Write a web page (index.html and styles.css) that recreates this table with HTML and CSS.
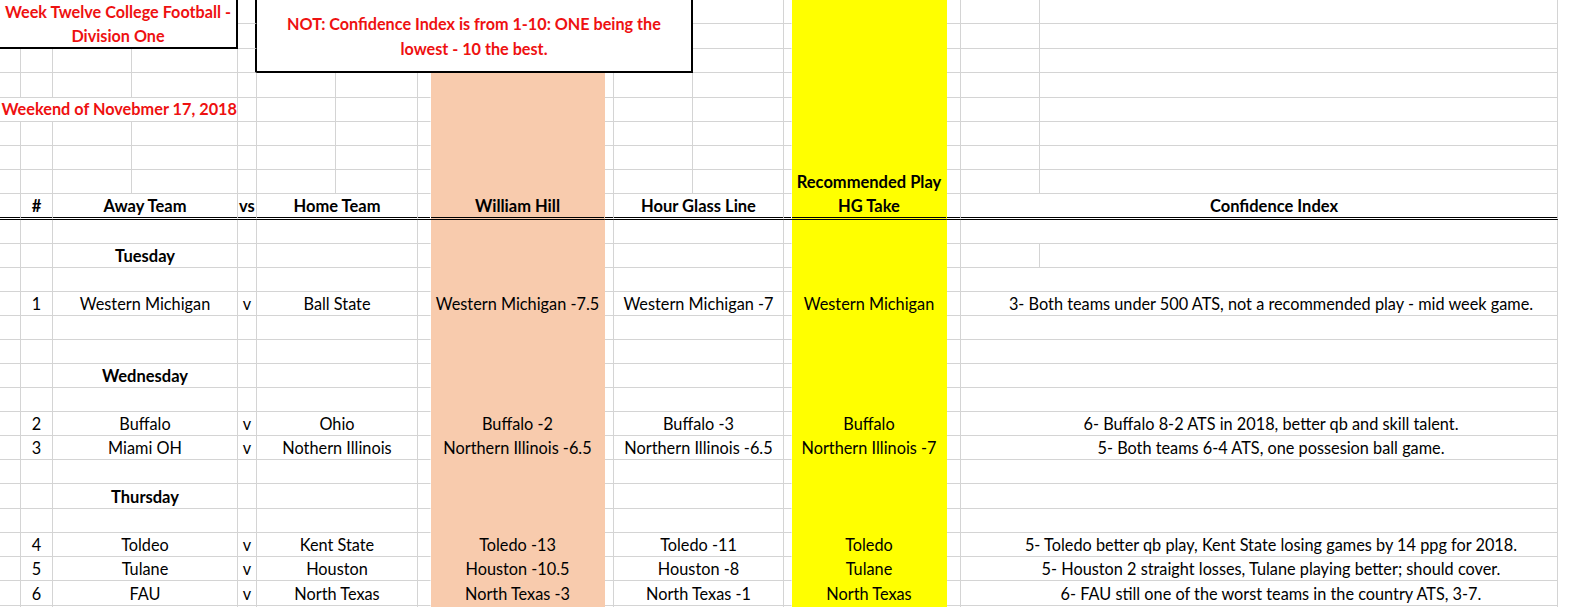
FILE: index.html
```html
<!DOCTYPE html>
<html lang="en">
<head>
<meta charset="utf-8">
<title>Week Twelve College Football - Division One</title>
<link rel="stylesheet" href="styles.css">
</head>
<body>
<div class="sheet">
  <div class="top">
    <div class="box1"><div>Week Twelve College Football -</div><div>Division One</div></div>
    <div class="box2"><div>NOT: Confidence Index is from 1-10: ONE being the</div><div>lowest - 10 the best.</div></div>
    <div class="c bk"></div><div class="c"></div><div class="c nr"></div><div class="c ye"></div><div class="c"></div><div class="c"></div><div class="c"></div>
    <div class="c bk"></div><div class="c"></div><div class="c nr"></div><div class="c ye"></div><div class="c"></div><div class="c"></div><div class="c"></div>
    <div class="c"></div><div class="c"></div><div class="c"></div><div class="c"></div><div class="c bk"></div><div class="c"></div><div class="c nr"></div><div class="c ye"></div><div class="c"></div><div class="c"></div><div class="c"></div>
  </div>

  <div class="row h25">
    <div class="c"></div><div class="c"></div><div class="c"></div><div class="c"></div><div class="c"></div><div class="c"></div><div class="c"></div><div class="c nr"></div><div class="c pe"></div><div class="c"></div><div class="c"></div><div class="c"></div><div class="c nr"></div><div class="c ye"></div><div class="c"></div><div class="c"></div><div class="c"></div>
  </div>
  <div class="row">
    <div class="c s4 red">Weekend of Novebmer 17, 2018</div><div class="c"></div><div class="c"></div><div class="c"></div><div class="c nr"></div><div class="c pe"></div><div class="c"></div><div class="c"></div><div class="c"></div><div class="c nr"></div><div class="c ye"></div><div class="c"></div><div class="c"></div><div class="c"></div>
  </div>
  <div class="row">
    <div class="c"></div><div class="c"></div><div class="c"></div><div class="c"></div><div class="c"></div><div class="c"></div><div class="c"></div><div class="c nr"></div><div class="c pe"></div><div class="c"></div><div class="c"></div><div class="c"></div><div class="c nr"></div><div class="c ye"></div><div class="c"></div><div class="c"></div><div class="c"></div>
  </div>
  <div class="row">
    <div class="c"></div><div class="c"></div><div class="c"></div><div class="c"></div><div class="c"></div><div class="c"></div><div class="c"></div><div class="c nr"></div><div class="c pe"></div><div class="c"></div><div class="c"></div><div class="c"></div><div class="c nr"></div><div class="c ye"></div><div class="c"></div><div class="c"></div><div class="c"></div>
  </div>
  <div class="row">
    <div class="c"></div><div class="c"></div><div class="c"></div><div class="c"></div><div class="c"></div><div class="c"></div><div class="c"></div><div class="c nr"></div><div class="c pe"></div><div class="c"></div><div class="c"></div><div class="c"></div><div class="c nr"></div><div class="c ye b">Recommended Play</div><div class="c"></div><div class="c"></div><div class="c"></div>
  </div>

  <div class="row hdr b">
    <div class="c"></div><div class="c">#</div><div class="c s2">Away Team</div><div class="c">vs</div><div class="c s2">Home Team</div><div class="c nr"></div><div class="c pe">William Hill</div><div class="c"></div><div class="c s2">Hour Glass Line</div><div class="c nr"></div><div class="c ye">HG Take</div><div class="c"></div><div class="c s2 ci-h">Confidence Index</div>
  </div>

  <div class="row">
    <div class="c"></div><div class="c"></div><div class="c s2"></div><div class="c"></div><div class="c s2"></div><div class="c nr"></div><div class="c pe"></div><div class="c"></div><div class="c s2"></div><div class="c nr"></div><div class="c ye"></div><div class="c"></div><div class="c s2"></div>
  </div>
  <div class="row">
    <div class="c"></div><div class="c"></div><div class="c s2 b">Tuesday</div><div class="c"></div><div class="c s2"></div><div class="c nr"></div><div class="c pe"></div><div class="c"></div><div class="c s2"></div><div class="c nr"></div><div class="c ye"></div><div class="c"></div><div class="c"></div><div class="c"></div>
  </div>
  <div class="row">
    <div class="c"></div><div class="c"></div><div class="c s2"></div><div class="c"></div><div class="c s2"></div><div class="c nr"></div><div class="c pe"></div><div class="c"></div><div class="c s2"></div><div class="c nr"></div><div class="c ye"></div><div class="c"></div><div class="c s2"></div>
  </div>
  <div class="row">
    <div class="c"></div><div class="c">1</div><div class="c s2">Western Michigan</div><div class="c">v</div><div class="c s2">Ball State</div><div class="c nr"></div><div class="c pe">Western Michigan -7.5</div><div class="c"></div><div class="c s2">Western Michigan -7</div><div class="c nr"></div><div class="c ye">Western Michigan</div><div class="c"></div><div class="c s2 ci">3- Both teams under 500 ATS, not a recommended play - mid week game.</div>
  </div>
  <div class="row">
    <div class="c"></div><div class="c"></div><div class="c s2"></div><div class="c"></div><div class="c s2"></div><div class="c nr"></div><div class="c pe"></div><div class="c"></div><div class="c s2"></div><div class="c nr"></div><div class="c ye"></div><div class="c"></div><div class="c s2"></div>
  </div>
  <div class="row">
    <div class="c"></div><div class="c"></div><div class="c s2"></div><div class="c"></div><div class="c s2"></div><div class="c nr"></div><div class="c pe"></div><div class="c"></div><div class="c s2"></div><div class="c nr"></div><div class="c ye"></div><div class="c"></div><div class="c s2"></div>
  </div>
  <div class="row">
    <div class="c"></div><div class="c"></div><div class="c s2 b">Wednesday</div><div class="c"></div><div class="c s2"></div><div class="c nr"></div><div class="c pe"></div><div class="c"></div><div class="c s2"></div><div class="c nr"></div><div class="c ye"></div><div class="c"></div><div class="c s2"></div>
  </div>
  <div class="row">
    <div class="c"></div><div class="c"></div><div class="c s2"></div><div class="c"></div><div class="c s2"></div><div class="c nr"></div><div class="c pe"></div><div class="c"></div><div class="c s2"></div><div class="c nr"></div><div class="c ye"></div><div class="c"></div><div class="c s2"></div>
  </div>
  <div class="row">
    <div class="c"></div><div class="c">2</div><div class="c s2">Buffalo</div><div class="c">v</div><div class="c s2">Ohio</div><div class="c nr"></div><div class="c pe">Buffalo -2</div><div class="c"></div><div class="c s2">Buffalo -3</div><div class="c nr"></div><div class="c ye">Buffalo</div><div class="c"></div><div class="c s2 ci">6- Buffalo 8-2 ATS in 2018, better qb and skill talent.</div>
  </div>
  <div class="row">
    <div class="c"></div><div class="c">3</div><div class="c s2">Miami OH</div><div class="c">v</div><div class="c s2">Nothern Illinois</div><div class="c nr"></div><div class="c pe">Northern Illinois -6.5</div><div class="c"></div><div class="c s2">Northern Illinois -6.5</div><div class="c nr"></div><div class="c ye">Northern Illinois -7</div><div class="c"></div><div class="c s2 ci">5- Both teams 6-4 ATS, one possesion ball game.</div>
  </div>
  <div class="row">
    <div class="c"></div><div class="c"></div><div class="c s2"></div><div class="c"></div><div class="c s2"></div><div class="c nr"></div><div class="c pe"></div><div class="c"></div><div class="c s2"></div><div class="c nr"></div><div class="c ye"></div><div class="c"></div><div class="c s2"></div>
  </div>
  <div class="row h25">
    <div class="c"></div><div class="c"></div><div class="c s2 b">Thursday</div><div class="c"></div><div class="c s2"></div><div class="c nr"></div><div class="c pe"></div><div class="c"></div><div class="c s2"></div><div class="c nr"></div><div class="c ye"></div><div class="c"></div><div class="c s2"></div>
  </div>
  <div class="row">
    <div class="c"></div><div class="c"></div><div class="c s2"></div><div class="c"></div><div class="c s2"></div><div class="c nr"></div><div class="c pe"></div><div class="c"></div><div class="c s2"></div><div class="c nr"></div><div class="c ye"></div><div class="c"></div><div class="c s2"></div>
  </div>
  <div class="row">
    <div class="c"></div><div class="c">4</div><div class="c s2">Toldeo</div><div class="c">v</div><div class="c s2">Kent State</div><div class="c nr"></div><div class="c pe">Toledo -13</div><div class="c"></div><div class="c s2">Toledo -11</div><div class="c nr"></div><div class="c ye">Toledo</div><div class="c"></div><div class="c s2 ci">5- Toledo better qb play, Kent State losing games by 14 ppg for 2018.</div>
  </div>
  <div class="row">
    <div class="c"></div><div class="c">5</div><div class="c s2">Tulane</div><div class="c">v</div><div class="c s2">Houston</div><div class="c nr"></div><div class="c pe">Houston -10.5</div><div class="c"></div><div class="c s2">Houston -8</div><div class="c nr"></div><div class="c ye">Tulane</div><div class="c"></div><div class="c s2 ci">5- Houston 2 straight losses, Tulane playing better; should cover.</div>
  </div>
  <div class="row h25">
    <div class="c"></div><div class="c">6</div><div class="c s2">FAU</div><div class="c">v</div><div class="c s2">North Texas</div><div class="c nr"></div><div class="c pe">North Texas -3</div><div class="c"></div><div class="c s2">North Texas -1</div><div class="c nr"></div><div class="c ye">North Texas</div><div class="c"></div><div class="c s2 ci">6- FAU still one of the worst teams in the country ATS, 3-7.</div>
  </div>
  <div class="row">
    <div class="c"></div><div class="c"></div><div class="c s2"></div><div class="c"></div><div class="c s2"></div><div class="c nr"></div><div class="c pe"></div><div class="c"></div><div class="c s2"></div><div class="c nr"></div><div class="c ye"></div><div class="c"></div><div class="c s2"></div>
  </div>
</div>
</body>
</html>
```

FILE: styles.css
```css
html, body {
  margin: 0;
  padding: 0;
  background: #ffffff;
}
body {
  width: 1580px;
  height: 607px;
  overflow: hidden;
  font-family: Lato, "Open Sans", sans-serif;
  font-size: 16.3px;
  color: #000000;
}
.sheet {
  display: flex;
  flex-direction: column;
}
.top, .row {
  display: grid;
  grid-template-columns: 21px 32px 79px 106px 19px 79px 82px 13px 174px 9px 79px 91px 8px 155px 14px 79px 518px;
}
.top {
  grid-template-rows: 24px 25px 24px;
}
.row { height: 24px; }
.row.h25 { height: 25px; }
.row.hdr { height: 26px; }

.c {
  border-right: 1px solid #d4d4d4;
  border-bottom: 1px solid #d4d4d4;
  display: flex;
  align-items: flex-end;
  justify-content: center;
  white-space: nowrap;
  line-height: 20px;
  padding-bottom: 1px;
  min-width: 0;
}
.s2 { grid-column: span 2; }
.s4 { grid-column: span 4; }
.nr { border-right-color: transparent; }
.pe { background: #f8cbad; border-color: #f8cbad; }
.ye { background: #ffff00; border-color: #ffff00; }
.bk { border-right: 2px solid #000000; }
.b { font-weight: 700; font-size: 16.5px; }
.hdr .c { border-bottom: 3px double #000000; }

.red {
  color: #ee1111;
  font-weight: 700;
  font-size: 16.3px;
  justify-content: flex-end;
  padding-bottom: 2px;
  border-right-color: #d4d4d4;
}
.ci { padding-left: 24px; }
.ci-h { padding-left: 30px; }

.box1, .box2 {
  color: #ee1111;
  font-weight: 700;
  font-size: 16.2px;
  text-align: center;
  white-space: nowrap;
}
.box1 {
  grid-column: 1 / 5;
  grid-row: 1 / 3;
  border-right: 2px solid #000000;
  border-bottom: 2px solid #000000;
  line-height: 24px;
}
.box2 {
  grid-column: 6 / 12;
  grid-row: 1 / 4;
  border-right: 2px solid #000000;
  border-bottom: 2px solid #000000;
  line-height: 25px;
  padding-top: 11px;
}
```
